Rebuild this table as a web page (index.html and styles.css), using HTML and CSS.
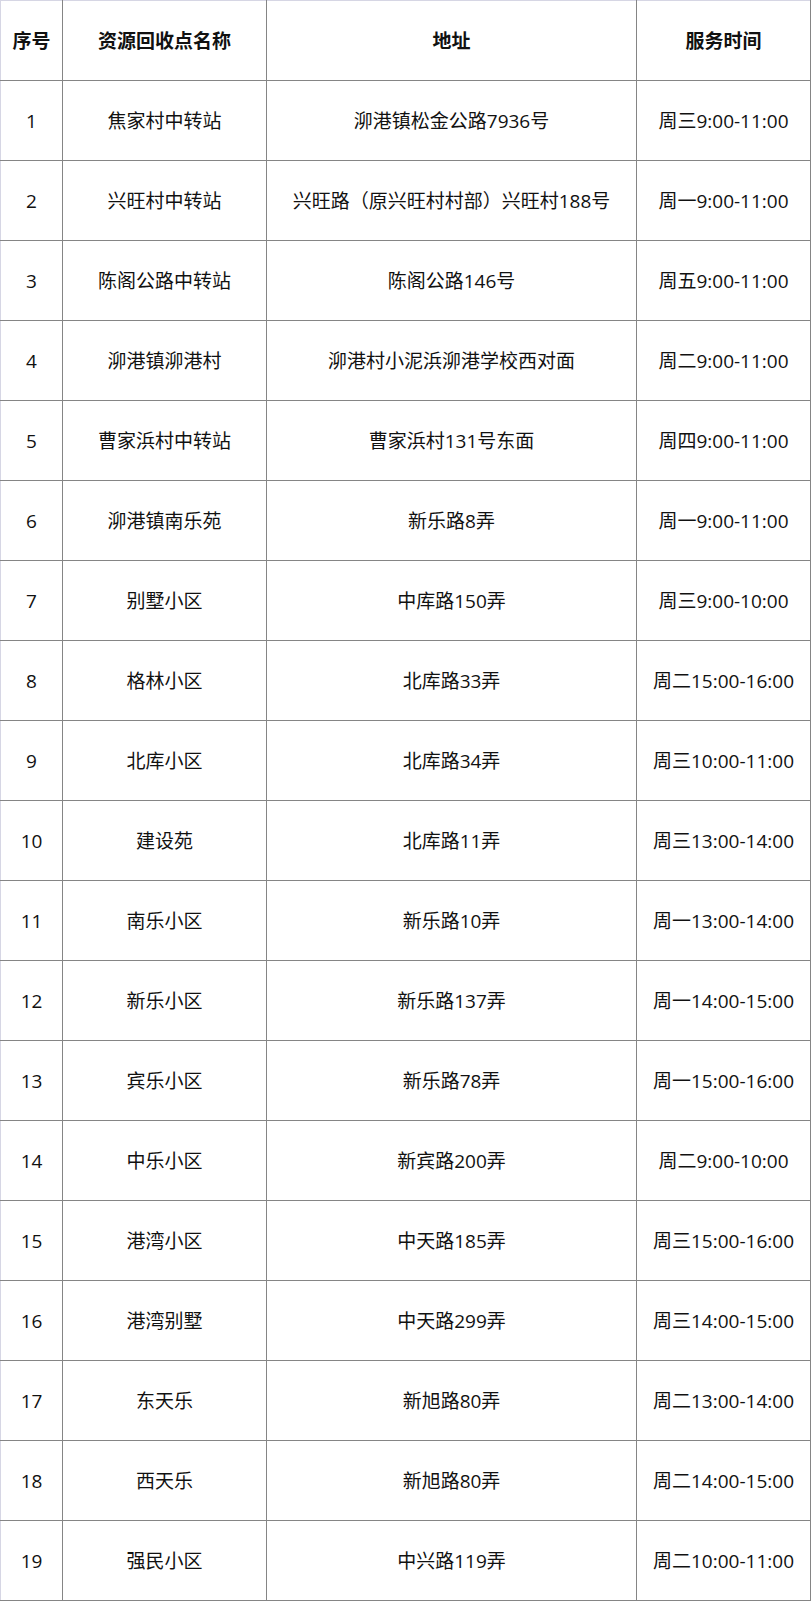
FILE: index.html
```html
<!DOCTYPE html>
<html lang="zh-CN">
<head>
<meta charset="utf-8">
<title>资源回收点</title>
<link rel="stylesheet" href="styles.css">
</head>
<body>
<table class="sched">
  <colgroup>
    <col class="c-no">
    <col class="c-name">
    <col class="c-addr">
    <col class="c-time">
  </colgroup>
  <thead>
    <tr><th>序号</th><th>资源回收点名称</th><th>地址</th><th>服务时间</th></tr>
  </thead>
  <tbody>
    <tr><td>1</td><td>焦家村中转站</td><td>泖港镇松金公路7936号</td><td>周三9:00-11:00</td></tr>
    <tr><td>2</td><td>兴旺村中转站</td><td>兴旺路（原兴旺村村部）兴旺村188号</td><td>周一9:00-11:00</td></tr>
    <tr><td>3</td><td>陈阁公路中转站</td><td>陈阁公路146号</td><td>周五9:00-11:00</td></tr>
    <tr><td>4</td><td>泖港镇泖港村</td><td>泖港村小泥浜泖港学校西对面</td><td>周二9:00-11:00</td></tr>
    <tr><td>5</td><td>曹家浜村中转站</td><td>曹家浜村131号东面</td><td>周四9:00-11:00</td></tr>
    <tr><td>6</td><td>泖港镇南乐苑</td><td>新乐路8弄</td><td>周一9:00-11:00</td></tr>
    <tr><td>7</td><td>别墅小区</td><td>中库路150弄</td><td>周三9:00-10:00</td></tr>
    <tr><td>8</td><td>格林小区</td><td>北库路33弄</td><td>周二15:00-16:00</td></tr>
    <tr><td>9</td><td>北库小区</td><td>北库路34弄</td><td>周三10:00-11:00</td></tr>
    <tr><td>10</td><td>建设苑</td><td>北库路11弄</td><td>周三13:00-14:00</td></tr>
    <tr><td>11</td><td>南乐小区</td><td>新乐路10弄</td><td>周一13:00-14:00</td></tr>
    <tr><td>12</td><td>新乐小区</td><td>新乐路137弄</td><td>周一14:00-15:00</td></tr>
    <tr><td>13</td><td>宾乐小区</td><td>新乐路78弄</td><td>周一15:00-16:00</td></tr>
    <tr><td>14</td><td>中乐小区</td><td>新宾路200弄</td><td>周二9:00-10:00</td></tr>
    <tr><td>15</td><td>港湾小区</td><td>中天路185弄</td><td>周三15:00-16:00</td></tr>
    <tr><td>16</td><td>港湾别墅</td><td>中天路299弄</td><td>周三14:00-15:00</td></tr>
    <tr><td>17</td><td>东天乐</td><td>新旭路80弄</td><td>周二13:00-14:00</td></tr>
    <tr><td>18</td><td>西天乐</td><td>新旭路80弄</td><td>周二14:00-15:00</td></tr>
    <tr><td>19</td><td>强民小区</td><td>中兴路119弄</td><td>周二10:00-11:00</td></tr>
  </tbody>
</table>
</body>
</html>
```

FILE: styles.css
```css
html, body {
  margin: 0;
  padding: 0;
  background: #ffffff;
}

body {
  font-family: "Open Sans", "Noto Sans CJK SC", sans-serif;
  color: #111111;
}

.sched {
  border-collapse: collapse;
  table-layout: fixed;
  width: 810px;
  border-top: 1px solid #d6d6e4;
  border-left: 1px solid #d6d6e4;
}

.c-no { width: 62px; }
.c-name { width: 204px; }
.c-addr { width: 370px; }
.c-time { width: 174px; }

.sched th,
.sched td {
  height: 79px;
  padding: 0;
  text-align: center;
  vertical-align: middle;
  font-size: 19px;
  line-height: 24px;
  border: 1px solid #858585;
  white-space: nowrap;
}

.sched thead th {
  border-top-color: #d6d6e4;
  font-weight: bold;
}

.sched tr > :first-child {
  border-left-color: #d6d6e4;
}
```
